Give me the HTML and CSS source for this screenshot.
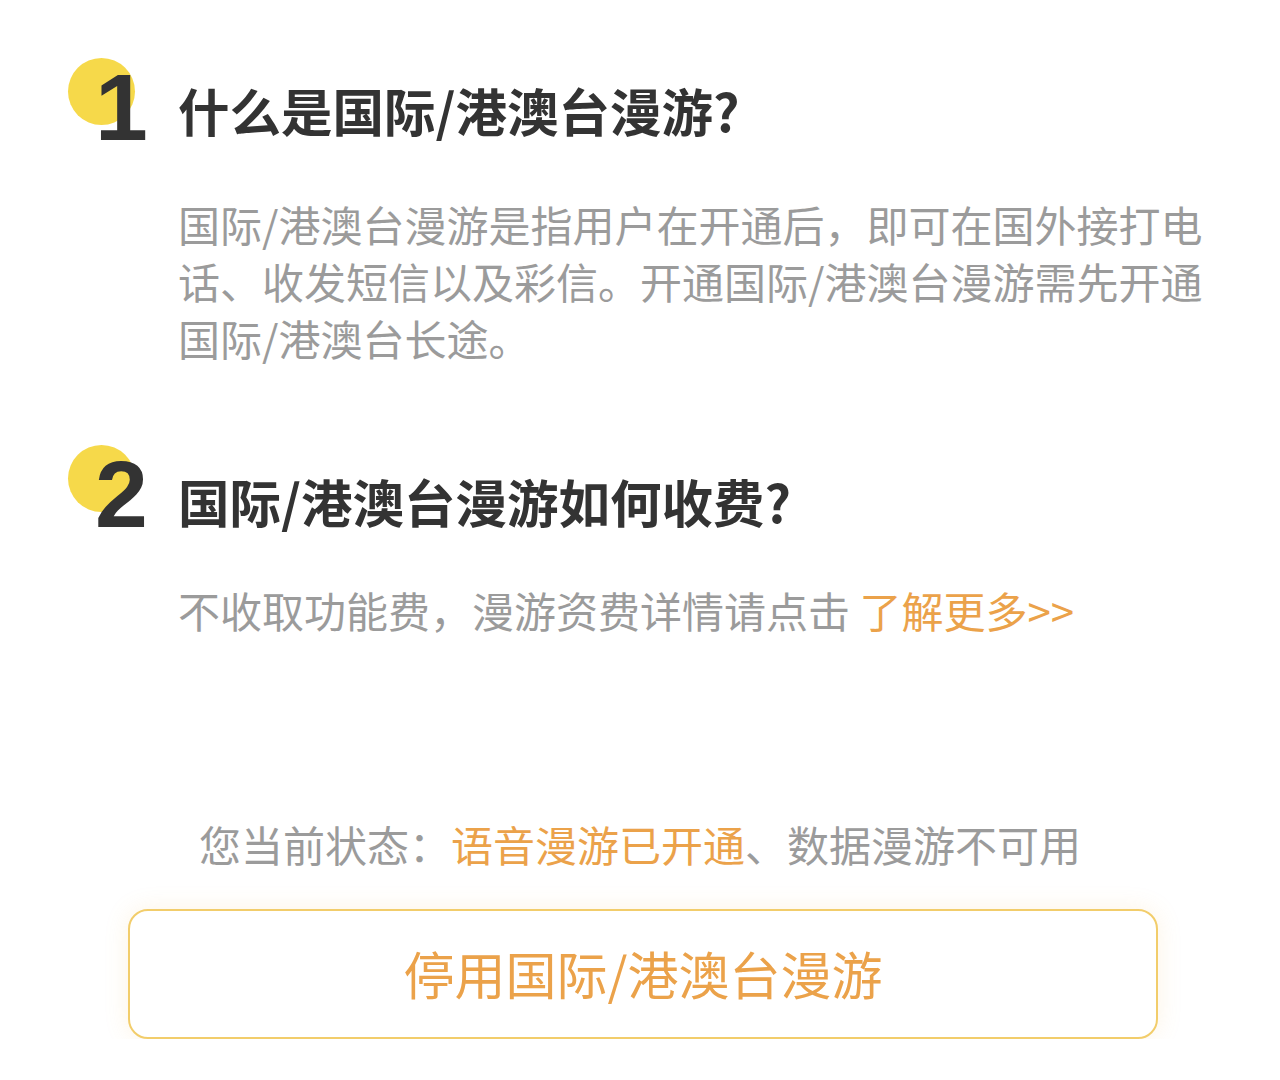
FILE: index.html
```html
<!DOCTYPE html>
<html lang="zh-CN">
<head>
    <meta charset="UTF-8">
    <meta name="viewport" content="width=device-width, initial-scale=1.0"/>
    <title>国际/港澳台漫游</title>
    <link rel="stylesheet" href="styles.css">
</head>
<body>

    <div class="page">
        <section class="faq faq-first">
            <div class="faq-head">
                <div class="badge">
                    <span class="badge-dot"></span>
                    <span class="badge-num">1</span>
                </div>
                <h2 class="faq-title">什么是国际/港澳台漫游?</h2>
            </div>
            <p class="faq-text">国际/港澳台漫游是指用户在开通后，即可在国外接打电话、收发短信以及彩信。开通国际/港澳台漫游需先开通国际/港澳台长途。</p>
        </section>

        <section class="faq faq-second">
            <div class="faq-head">
                <div class="badge">
                    <span class="badge-dot"></span>
                    <span class="badge-num">2</span>
                </div>
                <h2 class="faq-title">国际/港澳台漫游如何收费?</h2>
            </div>
            <p class="faq-text">不收取功能费，漫游资费详情请点击 <a class="more-link" href="#">了解更多&gt;&gt;</a></p>
        </section>

        <p class="status">您当前状态：<span class="highlight">语音漫游已开通</span>、数据漫游不可用</p>

        <button class="stop-btn">停用国际/港澳台漫游</button>
    </div>

</body>
</html>
```

FILE: styles.css
```css
body {
    margin: 0;
    background: #fff;
    font-family: "Noto Sans CJK SC", "Noto Sans", sans-serif;
}
.page {
    display: flex;
    flex-direction: column;
    padding-top: 58px;
}
.faq-head {
    display: flex;
    align-items: flex-start;
    padding-left: 68px;
}
.badge {
    position: relative;
    width: 110px;
    height: 82px;
    flex-shrink: 0;
}
.badge-dot {
    position: absolute;
    left: 0;
    top: 0;
    width: 67px;
    height: 67px;
    border-radius: 50%;
    background: #f6d94a;
}
.badge-num {
    position: relative;
    display: block;
    margin: 2px 0 0 27px;
    font-family: "Liberation Sans", Arial, sans-serif;
    font-weight: bold;
    font-size: 95px;
    line-height: 1;
    color: #333;
}
.faq-title {
    margin: 22px 0 0;
    font-size: 51.5px;
    line-height: 60px;
    font-weight: 700;
    color: #333;
}
.faq-text {
    margin: 55px 0 0 178px;
    width: 1040px;
    font-size: 42px;
    line-height: 57px;
    color: #9b9b9b;
}
.faq-second {
    margin-top: 79px;
}
.faq-second .faq-title {
    margin-top: 26px;
}
.faq-second .faq-text {
    margin-top: 50px;
}
.more-link {
    color: #eba24a;
    text-decoration: none;
}
.status {
    margin: 177px 0 0;
    text-align: center;
    font-size: 42px;
    line-height: 57px;
    color: #9b9b9b;
}
.highlight {
    color: #eba24a;
}
.stop-btn {
    margin: 37px 122px 0 128px;
    height: 130px;
    padding-bottom: 4px;
    background: #fff;
    border: 2px solid #f2cd6b;
    border-radius: 20px;
    box-shadow: 0 0 24px rgba(240, 180, 80, 0.15);
    font-family: "Noto Sans CJK SC", "Noto Sans", sans-serif;
    font-size: 51px;
    color: #eba24a;
    cursor: pointer;
}
```
